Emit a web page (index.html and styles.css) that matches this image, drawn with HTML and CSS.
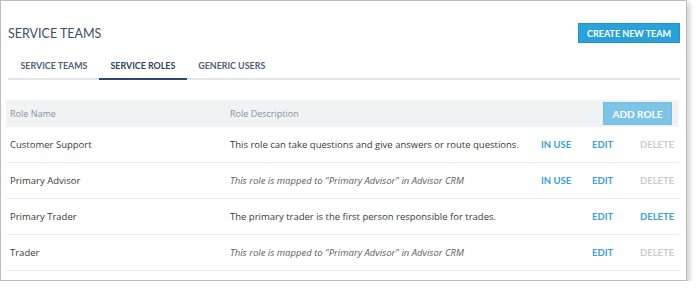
FILE: index.html
```html
<!DOCTYPE html>
<html lang="en">
<head>
    <meta charset="UTF-8">
    <title>Service Teams</title>
    <link rel="stylesheet" href="styles.css">
</head>
<body>
    <div class="frame">
        <div class="page-head">
            <h2>SERVICE TEAMS</h2>
            <button class="btn-primary">CREATE NEW TEAM</button>
        </div>
        <div class="tabs">
            <span class="tab">SERVICE TEAMS</span>
            <span class="tab active">SERVICE ROLES</span>
            <span class="tab">GENERIC USERS</span>
        </div>

        <div class="roles">
            <div class="row head">
                <span>Role Name</span>
                <span>Role Description</span>
                <span class="head-action"><button class="btn-add">ADD ROLE</button></span>
            </div>
            <div class="row">
                <span>Customer Support</span>
                <span>This role can take questions and give answers or route questions.</span>
                <a class="link">IN USE</a>
                <a class="link">EDIT</a>
                <a class="link off">DELETE</a>
            </div>
            <div class="row">
                <span>Primary Advisor</span>
                <span class="mapped">This role is mapped to "Primary Advisor" in Advisor CRM</span>
                <a class="link">IN USE</a>
                <a class="link">EDIT</a>
                <a class="link off">DELETE</a>
            </div>
            <div class="row">
                <span>Primary Trader</span>
                <span>The primary trader is the first person responsible for trades.</span>
                <span></span>
                <a class="link">EDIT</a>
                <a class="link">DELETE</a>
            </div>
            <div class="row">
                <span>Trader</span>
                <span class="mapped">This role is mapped to "Primary Advisor" in Advisor CRM</span>
                <span></span>
                <a class="link">EDIT</a>
                <a class="link off">DELETE</a>
            </div>
        </div>
    </div>
</body>
</html>
```

FILE: styles.css
```css
* {
    margin: 0;
    padding: 0;
    box-sizing: border-box;
}
body {
    background: #fff;
    font-family: "Open Sans", sans-serif;
}
.frame {
    width: 687px;
    height: 281px;
    border: 1px solid #bcbcbc;
    box-shadow: 3px 3px 5px rgba(0, 0, 0, 0.18);
    padding: 22px 6px 0 5px;
}
.page-head {
    display: flex;
    justify-content: space-between;
    align-items: center;
    height: 20px;
    padding-left: 2px;
}
.page-head h2 {
    font-family: Lato, sans-serif;
    font-weight: 400;
    font-size: 12.5px;
    color: #3b4f67;
}
.btn-primary {
    height: 20px;
    width: 102px;
    border: 1px solid #2193cb;
    background: #2ba1d9;
    color: #fff;
    font-family: Lato, sans-serif;
    font-weight: 700;
    font-size: 9px;
}
.tabs {
    display: flex;
    margin: 10px 0 0 2px;
    padding-left: 1px;
    border-bottom: 2px solid #e3e6e8;
}
.tab {
    font-family: Lato, sans-serif;
    font-weight: 700;
    font-size: 8.9px;
    color: #4d6279;
    padding: 7px 11.5px 7px;
    margin-bottom: -2px;
    border-bottom: 2px solid transparent;
}
.tab.active {
    color: #2e4460;
    border-bottom-color: #2b4a6e;
}
.roles {
    margin-top: 20px;
    width: 673px;
}
.row {
    display: grid;
    grid-template-columns: 220px 311px 51px 48px 43px;
    align-items: center;
    height: 36px;
    border-bottom: 1px solid #e9ecee;
    font-size: 9.5px;
    color: #3a3a3a;
}
.row > * {
    padding-left: 4px;
}
.row.head {
    height: 27px;
    background: #f0f2f4;
    border-bottom: none;
    color: #7f95a6;
    font-size: 9px;
}
.head-action {
    grid-column: 3 / 6;
    display: flex;
    justify-content: flex-end;
    padding-right: 7px;
}
.btn-add {
    width: 69px;
    height: 23px;
    border: 1px solid #74bde2;
    background: #7dc4e7;
    color: #fff;
    font-family: Lato, sans-serif;
    font-weight: 700;
    font-size: 10px;
}
.mapped {
    font-style: italic;
    color: #5e5e5e;
}
.link {
    font-family: Lato, sans-serif;
    font-weight: 700;
    font-size: 9.5px;
    color: #3ba0da;
}
.link.off {
    color: #cbcbcb;
}
```
